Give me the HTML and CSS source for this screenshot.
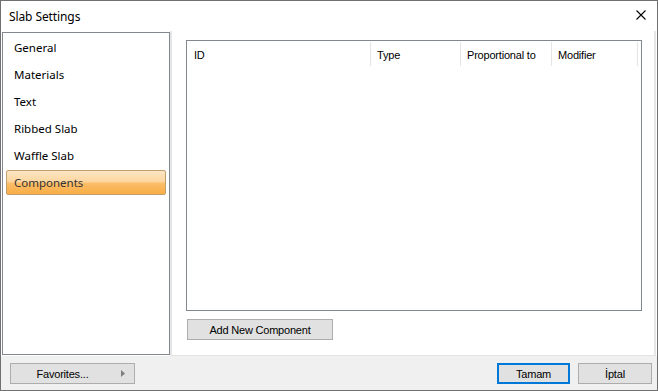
FILE: index.html
```html
<!DOCTYPE html>
<html>
<head>
<meta charset="utf-8">
<link rel="stylesheet" href="styles.css">
</head>
<body>
<div class="window">
  <div class="titlebar">
    <span class="title">Slab Settings</span>
    <svg class="close" width="10" height="10" viewBox="0 0 10 10"><path d="M0.5 0.5 L9.5 9.5 M9.5 0.5 L0.5 9.5" stroke="#000" stroke-width="1.1" fill="none"/></svg>
  </div>
  <div class="main">
    <ul class="nav">
      <li>General</li>
      <li>Materials</li>
      <li>Text</li>
      <li>Ribbed Slab</li>
      <li>Waffle Slab</li>
      <li class="selected">Components</li>
    </ul>
    <div class="panel">
      <div class="grid">
        <div class="header">
          <div class="col c-id">ID</div>
          <div class="col c-type">Type</div>
          <div class="col c-prop">Proportional to</div>
          <div class="col c-mod">Modifier</div>
        </div>
      </div>
      <button class="btn add">Add New Component</button>
    </div>
  </div>
  <div class="footer">
    <button class="btn fav"><span>Favorites...</span><svg class="arrow" width="4" height="7" viewBox="0 0 4 7"><path d="M0 0 L4 3.5 L0 7 Z" fill="#808080"/></svg></button>
    <div class="spacer"></div>
    <button class="btn ok">Tamam</button>
    <button class="btn cancel">İptal</button>
  </div>
</div>
</body>
</html>
```
FILE: styles.css
```css
* { box-sizing: border-box; }
html, body { margin: 0; padding: 0; background: #fff; }
.window {
  width: 658px;
  height: 391px;
  border: 1px solid #707070;
  display: flex;
  flex-direction: column;
  background: #fff;
  font-family: "Noto Sans", sans-serif;
  color: #000;
}
.titlebar {
  height: 30px;
  flex: none;
  display: flex;
  align-items: center;
  padding-left: 8px;
  padding-right: 11px;
  justify-content: space-between;
}
.title { font-size: 12px; letter-spacing: -0.1px; }
.close { display: block; margin-top: -2px; }
.main {
  height: 325px;
  flex: none;
  display: flex;
  padding-left: 1px;
}
.nav {
  list-style: none;
  margin: 1px 0 0 0;
  padding: 2px 3px 0 3px;
  width: 168px;
  height: 323px;
  border: 1px solid #828790;
  font-size: 11.5px;
}
.nav li {
  height: 25px;
  line-height: 23px;
  margin-bottom: 2px;
  padding-left: 7px;
  border: 1px solid transparent;
  border-radius: 2px;
}
.nav li.selected {
  border-color: #c0a06c;
  background: linear-gradient(to bottom, #fde6c4 0%, #fcd6a0 45%, #fbbd68 55%, #f9ad45 100%);
  color: #333;
}
.panel {
  flex: 1;
  border-left: 2px solid #e6e6e6;
  border-right: 2px solid #e6e6e6;
  border-bottom: 1px solid #e3e3e3;
  margin-right: 1px;
  padding: 9px 0 0 14px;
  display: flex;
  flex-direction: column;
  align-items: flex-start;
}
.grid {
  width: 456px;
  height: 271px;
  border: 1px solid #828790;
  background: #fff;
}
.header {
  display: flex;
  height: 25px;
  padding-top: 1px;
  font-family: "Liberation Sans", Arial, sans-serif;
  font-size: 11px;
  letter-spacing: -0.2px;
}
.col {
  height: 24px;
  line-height: 27px;
  padding-left: 6px;
  border-right: 1px solid #e5e5e5;
}
.c-id { width: 184px; padding-left: 7px; }
.c-type { width: 90px; }
.c-prop { width: 91px; }
.c-mod { width: 86px; }
.btn {
  height: 21px;
  border: 1px solid #adadad;
  background: #e1e1e1;
  font-family: "Liberation Sans", Arial, sans-serif;
  font-size: 11px;
  letter-spacing: -0.2px;
  color: #000;
  padding: 1px 0 0 0;
  margin: 0;
}
.add {
  margin-top: 8px;
  margin-left: 1px;
  width: 146px;
}
.footer {
  flex: 1;
  background: #f0f0f0;
  display: flex;
  align-items: flex-start;
  padding: 6px 5px 0 9px;
  border-top: 1px solid #f0f0f0;
}
.fav {
  width: 125px;
  position: relative;
  display: flex;
  align-items: center;
  justify-content: center;
  padding-right: 20px;
}
.arrow { position: absolute; right: 9px; top: 6px; }
.spacer { flex: 1; }
.ok {
  width: 73px;
  border: 2px solid #0078d7;
}
.cancel {
  width: 74px;
  margin-left: 8px;
}
```
